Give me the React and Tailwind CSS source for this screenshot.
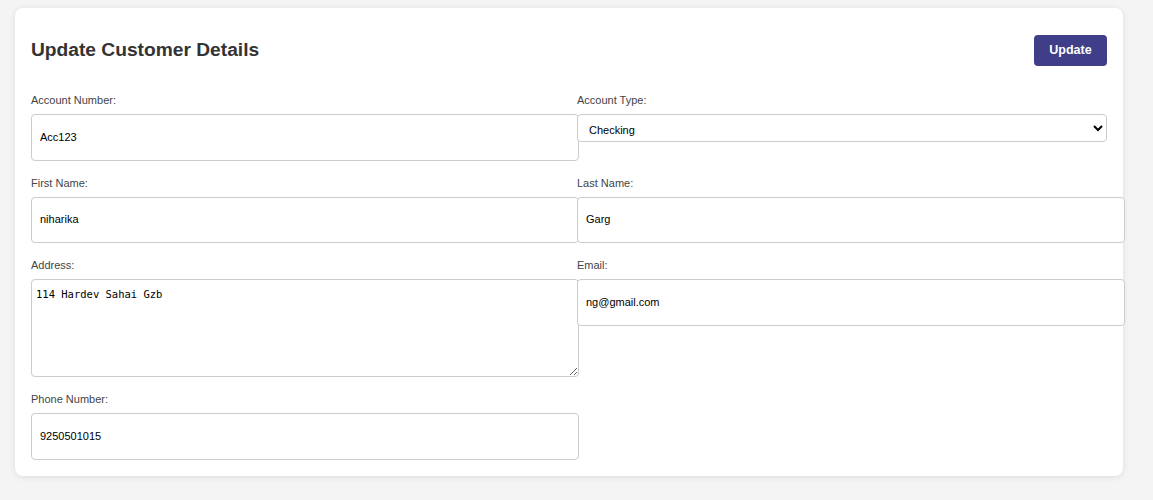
import React from 'react'

const Field = ({ label, children }) => (
    <div className="flex flex-col min-w-0">
        <label className="text-[11px] leading-[14px] text-[#444] mb-[7px]">{label}</label>
        {children}
    </div>
)

const inputCls = "box-content w-full px-2 py-[14.75px] text-[11px] leading-[15px] text-black bg-white border border-[#cccccc] rounded-[4px] outline-none"

const App = () => {
    return (
        <div className="min-h-[500px] bg-[#f4f4f4] pl-[15px] pt-2 font-['Liberation_Sans',Arial,sans-serif]">
            <div className="w-[1108px] bg-white rounded-lg shadow-[0_1px_6px_rgba(0,0,0,0.1)] px-4 pt-4 pb-4">
                {/* header */}
                <div className="flex items-center justify-between h-[53px] mb-4">
                    <h2 className="text-[19.2px] font-bold text-[#333]">Update Customer Details</h2>
                    <button className="w-[73px] h-[31px] rounded-[4px] bg-[#403e88] text-white text-[12.5px] font-bold">Update</button>
                </div>

                <div className="grid grid-cols-2 gap-x-4 gap-y-[15px] items-start">
                    <Field label="Account Number:">
                        <input className={inputCls} defaultValue="Acc123" />
                    </Field>
                    <Field label="Account Type:">
                        <select defaultValue="Checking" className="w-full h-[28px] pl-[7px] pr-2 pt-[4px] text-[11px] text-black bg-white border border-[#cccccc] rounded-[4px] outline-none">
                            <option>Checking</option>
                            <option>Savings</option>
                        </select>
                    </Field>

                    <Field label="First Name:">
                        <input className={inputCls} defaultValue="niharika" />
                    </Field>
                    <Field label="Last Name:">
                        <input className={inputCls} defaultValue="Garg" />
                    </Field>

                    <Field label="Address:">
                        <textarea defaultValue="114 Hardev Sahai Gzb" className="w-[calc(100%+18px)] h-[98px] px-[4px] pt-[7px] text-[10.5px] leading-[14px] font-['DejaVu_Sans_Mono',monospace] text-black bg-white border border-[#cccccc] rounded-[4px] outline-none" />
                    </Field>
                    <Field label="Email:">
                        <input className={inputCls} defaultValue="ng@gmail.com" />
                    </Field>

                    <Field label="Phone Number:">
                        <input className={inputCls} defaultValue="9250501015" />
                    </Field>
                </div>
            </div>
        </div>
    )
}

export default App
